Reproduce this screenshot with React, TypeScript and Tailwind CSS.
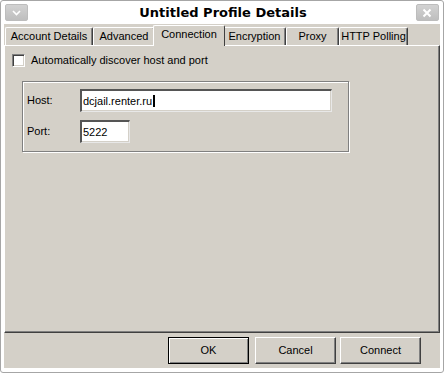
import React from "react";

const tabs = [
  { label: "Account Details", w: "w-[88px]" },
  { label: "Advanced", w: "w-[62px]" },
  { label: "Connection", w: "w-[72px]", active: true },
  { label: "Encryption", w: "w-[63px]" },
  { label: "Proxy", w: "w-[53px]" },
  { label: "HTTP Polling", w: "w-[69px]" },
];

function TitleButton({ children }: { children: React.ReactNode }) {
  return (
    <div className="w-[23px] h-[17px] rounded-[2px] border border-[#bdbdbd] bg-[linear-gradient(#d2d2d2,#bebebe)] flex items-center justify-center">
      {children}
    </div>
  );
}

function SunkenInput({ value, w, caret }: { value: string; w: string; caret?: boolean }) {
  return (
    <div className={`${w} h-[23px] bg-white border-t-2 border-l-2 border-t-[#555] border-l-[#555] border-b border-r border-b-[#e8e8e8] border-r-[#e8e8e8] shadow-[inset_-1px_-1px_0_#d4d0c8] flex items-center pl-[1px]`}>
      <span className="text-[11px] leading-none text-black">{value}</span>
      {caret && <span className="w-[2px] h-[12px] bg-black ml-[1px]" />}
    </div>
  );
}

function PushButton({ label, isDefault, margin }: { label: string; isDefault?: boolean; margin?: string }) {
  return (
    <div
      className={`w-[81px] h-[27px] flex items-center justify-center text-[11px] text-black bg-[#d4d0c8] ${margin ?? ""} ${
        isDefault
          ? "border border-black shadow-[inset_1px_1px_0_#fff,inset_-1px_-1px_0_#808080]"
          : "border-t border-l border-t-white border-l-white border-b border-r border-b-[#404040] border-r-[#404040] shadow-[inset_-1px_-1px_0_#808080]"
      }`}
    >
      {label}
    </div>
  );
}

export default function App() {
  return (
    <div className="w-[444px] h-[373px] bg-white border border-[#a6a6a6] rounded-[3px] flex flex-col pl-[3px] pr-[3px] pb-[4px] font-['Liberation_Sans',Arial,sans-serif] overflow-hidden">
      {/* Title bar */}
      <div className="h-[23px] shrink-0 flex items-center justify-between px-[1px]">
        <TitleButton>
          <svg width="9" height="6" viewBox="0 0 9 6">
            <path d="M1 1 L4.5 4.5 L8 1" fill="none" stroke="#fff" strokeWidth="1.6" />
          </svg>
        </TitleButton>
        <span className="font-['DejaVu_Sans',sans-serif] font-bold text-[13px] text-black leading-none pl-[2px]">
          Untitled Profile Details
        </span>
        <TitleButton>
          <svg width="10" height="10" viewBox="0 0 10 10">
            <path d="M1.5 1.5 L8.5 8.5 M8.5 1.5 L1.5 8.5" fill="none" stroke="#fff" strokeWidth="2" />
          </svg>
        </TitleButton>
      </div>

      {/* Body */}
      <div className="flex-1 bg-[#d4d0c8] flex flex-col">
        {/* Tabs */}
        <div className="h-[21px] shrink-0 flex items-end pl-[1px]">
          {tabs.map((t) =>
            t.active ? (
              <div
                key={t.label}
                className={`${t.w} -mx-[2px] h-[21px] -mb-px relative z-10 bg-[#d4d0c8] border-t border-l border-t-white border-l-white border-r border-r-[#404040] rounded-t-[2px] flex items-start justify-center pt-[3px] text-[11px] leading-none text-black`}
              >
                {t.label}
              </div>
            ) : (
              <div
                key={t.label}
                className={`${t.w} h-[18px] bg-[#d4d0c8] border-t border-l border-t-white border-l-white border-r border-r-[#404040] shadow-[inset_-1px_0_0_#808080] rounded-t-[2px] flex items-center justify-center text-[11px] leading-none text-black`}
              >
                {t.label}
              </div>
            )
          )}
        </div>

        {/* Panel */}
        <div className="h-[288px] shrink-0 border-t border-l border-t-white border-l-white border-b border-r border-b-[#404040] border-r-[#404040] shadow-[inset_-1px_-1px_0_#808080] flex flex-col pl-[7px] pt-[8px]">
          <div className="flex items-center">
            <div className="w-[13px] h-[13px] bg-white border-t border-l border-t-[#808080] border-l-[#808080] border-b border-r border-b-white border-r-white shadow-[inset_1px_1px_0_#404040,inset_-1px_-1px_0_#d4d0c8]" />
            <span className="ml-[6px] text-[11px] text-black leading-none">Automatically discover host and port</span>
          </div>

          <div className="ml-[10px] mt-[14px] w-[327px] h-[71px] border border-[#808080] shadow-[inset_1px_1px_0_#fff,1px_1px_0_#fff] flex flex-col pl-[4px] pt-[7px] gap-[8px]">
            <div className="flex items-center">
              <span className="w-[53px] text-[11px] text-black leading-none">Host:</span>
              <SunkenInput value="dcjail.renter.ru" w="w-[252px]" caret />
            </div>
            <div className="flex items-center">
              <span className="w-[53px] text-[11px] text-black leading-none">Port:</span>
              <SunkenInput value="5222" w="w-[50px]" />
            </div>
          </div>
        </div>

        {/* Buttons */}
        <div className="flex-1 flex justify-end items-start pt-[4px] pr-[19px]">
          <PushButton label="OK" isDefault margin="mr-[6px]" />
          <PushButton label="Cancel" margin="mr-[4px]" />
          <PushButton label="Connect" />
        </div>
      </div>
    </div>
  );
}
